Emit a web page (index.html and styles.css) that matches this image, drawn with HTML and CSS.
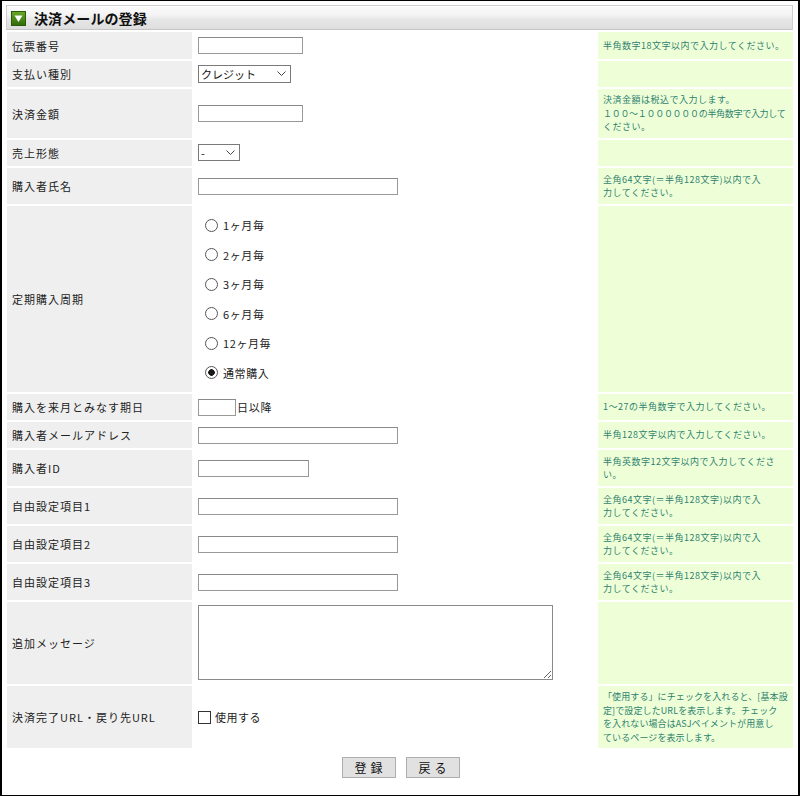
FILE: index.html
```html
<!DOCTYPE html>
<html lang="ja">
<head>
<meta charset="utf-8">
<title>決済メールの登録</title>
<link rel="stylesheet" href="styles.css">
</head>
<body>
<div class="window">
  <div class="head">
    <span class="icon"><svg width="15" height="15" viewBox="0 0 15 15"><defs><linearGradient id="g" x1="0" y1="0" x2="0" y2="1"><stop offset="0" stop-color="#6aa82a"/><stop offset="1" stop-color="#2f6a08"/></linearGradient></defs><rect x="0.5" y="0.5" width="14" height="14" fill="url(#g)" stroke="#2a5a0a"/><polygon points="3.5,4.5 11.5,4.5 7.5,11" fill="#fff"/></svg></span>
    <h1 class="title">決済メールの登録</h1>
  </div>

  <div class="form">
    <div class="lbl">伝票番号</div>
    <div class="fld"><input class="in w105" type="text"></div>
    <div class="help">半角数字18文字以内で入力してください。</div>

    <div class="lbl">支払い種別</div>
    <div class="fld"><span class="sel"><select class="w93"><option>クレジット</option></select><svg class="chev" width="9" height="6" viewBox="0 0 9 6"><polyline points="0.5,0.5 4.5,4.5 8.5,0.5" fill="none" stroke="#444" stroke-width="1"/></svg></span></div>
    <div class="help"></div>

    <div class="lbl">決済金額</div>
    <div class="fld"><input class="in w105" type="text"></div>
    <div class="help"><span>決済金額は税込で入力します。<br><span class="tight">１００～１００００００の半角数字で入力して</span><br>ください。</span></div>

    <div class="lbl">売上形態</div>
    <div class="fld"><span class="sel"><select class="w42"><option>-</option></select><svg class="chev" width="9" height="6" viewBox="0 0 9 6"><polyline points="0.5,0.5 4.5,4.5 8.5,0.5" fill="none" stroke="#444" stroke-width="1"/></svg></span></div>
    <div class="help"></div>

    <div class="lbl">購入者氏名</div>
    <div class="fld"><input class="in w200" type="text"></div>
    <div class="help"><span>全角64文字(＝半角128文字)以内で入<br>力してください。</span></div>

    <div class="lbl">定期購入周期</div>
    <div class="fld radios">
      <label class="ritem"><input type="radio" name="cycle" class="rad"><span>1ヶ月毎</span></label>
      <label class="ritem"><input type="radio" name="cycle" class="rad"><span>2ヶ月毎</span></label>
      <label class="ritem"><input type="radio" name="cycle" class="rad"><span>3ヶ月毎</span></label>
      <label class="ritem"><input type="radio" name="cycle" class="rad"><span>6ヶ月毎</span></label>
      <label class="ritem"><input type="radio" name="cycle" class="rad"><span>12ヶ月毎</span></label>
      <label class="ritem"><input type="radio" name="cycle" class="rad" checked><span>通常購入</span></label>
    </div>
    <div class="help"></div>

    <div class="lbl">購入を来月とみなす期日</div>
    <div class="fld"><input class="in w38" type="text"><span class="after">日以降</span></div>
    <div class="help">1～27の半角数字で入力してください。</div>

    <div class="lbl">購入者メールアドレス</div>
    <div class="fld"><input class="in w200" type="text"></div>
    <div class="help">半角128文字以内で入力してください。</div>

    <div class="lbl">購入者ID</div>
    <div class="fld"><input class="in w111" type="text"></div>
    <div class="help"><span>半角英数字12文字以内で入力してくださ<br>い。</span></div>

    <div class="lbl">自由設定項目1</div>
    <div class="fld"><input class="in w200" type="text"></div>
    <div class="help"><span>全角64文字(＝半角128文字)以内で入<br>力してください。</span></div>

    <div class="lbl">自由設定項目2</div>
    <div class="fld"><input class="in w200" type="text"></div>
    <div class="help"><span>全角64文字(＝半角128文字)以内で入<br>力してください。</span></div>

    <div class="lbl">自由設定項目3</div>
    <div class="fld"><input class="in w200" type="text"></div>
    <div class="help"><span>全角64文字(＝半角128文字)以内で入<br>力してください。</span></div>

    <div class="lbl">追加メッセージ</div>
    <div class="fld area"><textarea class="ta"></textarea></div>
    <div class="help"></div>

    <div class="lbl">決済完了URL・戻り先URL</div>
    <div class="fld"><label class="chk"><input type="checkbox" class="cb"><span>使用する</span></label></div>
    <div class="help long"><span>「使用する」にチェックを入れると、[基本設<br>定]で設定したURLを表示します。チェック<br>を入れない場合はASJペイメントが用意し<br>ているページを表示します。</span></div>
  </div>

  <div class="buttons">
    <button class="btn" type="button">登録</button>
    <button class="btn" type="button">戻る</button>
  </div>
</div>
</body>
</html>
```

FILE: styles.css
```css
html, body {
  margin: 0;
  padding: 0;
  background: #fff;
}
body {
  font-family: "Noto Sans CJK JP", "Noto Sans", sans-serif;
  color: #222;
}
.window {
  width: 800px;
  height: 796px;
  box-sizing: border-box;
  border-top: 1px solid #000;
  border-bottom: 1px solid #000;
  border-left: 2px solid #000;
  border-right: 2px solid #000;
  overflow: hidden;
}
.head {
  margin: 4px 5px 0 4px;
  height: 25px;
  box-sizing: border-box;
  border: 1px solid #cfcfcf;
  border-bottom-color: #c4c4c4;
  background: linear-gradient(#fbfbfb 0%, #f3f3f3 40%, #e6e6e6 60%, #dedede 100%);
  box-shadow: inset 0 1px 0 #fff;
  display: flex;
  align-items: center;
  padding-left: 4px;
}
.icon {
  width: 15px;
  height: 15px;
  display: block;
  margin-top: 1px;
}
.icon svg { display: block; }
.title {
  margin: 0 0 0 8px;
  font-size: 14px;
  font-weight: bold;
  color: #111;
  line-height: 18px;
  letter-spacing: 0.1px;
}
.form {
  margin: 2px 5px 0 5px;
  display: grid;
  grid-template-columns: 185px 404px 195px;
  grid-template-rows: 27px 26px 49px 26px 36px 186px 26px 26px 36px 36px 36px 36px 82px 62px;
  column-gap: 1px;
  row-gap: 2px;
}
.lbl {
  background: #efefef;
  font-size: 11px;
  letter-spacing: 1px;
  display: flex;
  align-items: center;
  padding-left: 5px;
  color: #222;
}
.fld {
  display: flex;
  align-items: center;
  padding: 0 5px;
  font-size: 11px;
}
.help {
  background: #eeffd8;
  color: #2f7f6f;
  font-size: 9px;
  line-height: 13.5px;
  letter-spacing: 0.5px;
  padding: 0 1px 0 5px;
  display: flex;
  align-items: center;
  white-space: nowrap;
  overflow: hidden;
}
.help.long {
  letter-spacing: 0.1px;
}
.tight {
  letter-spacing: -0.3px;
}
.in {
  height: 17px;
  box-sizing: border-box;
  border: 1px solid #999;
  border-top-color: #8a8a8a;
  padding: 0 2px;
  margin: 0;
  font-size: 11px;
  background: #fff;
}
.w105 { width: 105px; }
.w200 { width: 200px; }
.w111 { width: 111px; }
.w38 { width: 38px; }
.after {
  font-size: 11px;
  letter-spacing: 0.8px;
  margin-left: 1px;
}
.sel {
  position: relative;
  display: inline-block;
  height: 18px;
}
.sel select {
  appearance: none;
  -webkit-appearance: none;
  height: 18px;
  box-sizing: border-box;
  border: 1px solid #7a7a7a;
  background: #fff;
  font-family: "Noto Sans CJK JP", sans-serif;
  font-size: 11px;
  line-height: 16px;
  padding: 0 0 0 2px;
  margin: 0;
  color: #111;
  border-radius: 0;
  display: block;
}
.w93 { width: 93px; }
.sel .w42 { width: 42px; height: 17px; }
.chev {
  position: absolute;
  right: 5px;
  top: 6px;
  pointer-events: none;
}
.radios {
  flex-direction: column;
  align-items: flex-start;
  justify-content: center;
}
.ritem {
  height: 29.5px;
  display: flex;
  align-items: center;
  font-size: 11px;
  letter-spacing: 0.6px;
}
.rad {
  appearance: none;
  -webkit-appearance: none;
  width: 13px;
  height: 13px;
  box-sizing: border-box;
  border: 1px solid #555;
  border-radius: 50%;
  margin: 0 5px 0 7px;
  background: #fff;
}
.rad:checked {
  background: radial-gradient(circle, #1a1a1a 0 3px, #fff 3.6px);
}
.area {
  align-items: flex-start;
  padding-top: 3px;
}
.ta {
  width: 355px;
  height: 75px;
  box-sizing: border-box;
  border: 1px solid #8a8a8a;
  margin: 0;
  padding: 2px;
  resize: both;
}
.chk {
  display: flex;
  align-items: center;
  font-size: 11px;
  letter-spacing: 0.5px;
}
.cb {
  appearance: none;
  -webkit-appearance: none;
  width: 13px;
  height: 13px;
  box-sizing: border-box;
  border: 1px solid #333;
  background: #fff;
  margin: 0 4px 0 0;
  border-radius: 0;
}
.buttons {
  display: flex;
  justify-content: center;
  gap: 10px;
  margin-top: 9px;
  padding-left: 1px;
}
.btn {
  width: 54px;
  height: 21px;
  box-sizing: border-box;
  border: 1px solid #adadad;
  background: #e1e1e1;
  font-family: "Noto Sans CJK JP", sans-serif;
  font-size: 12px;
  letter-spacing: 4px;
  text-indent: 4px;
  padding: 0;
  color: #111;
  border-radius: 0;
  line-height: 19px;
}
```
